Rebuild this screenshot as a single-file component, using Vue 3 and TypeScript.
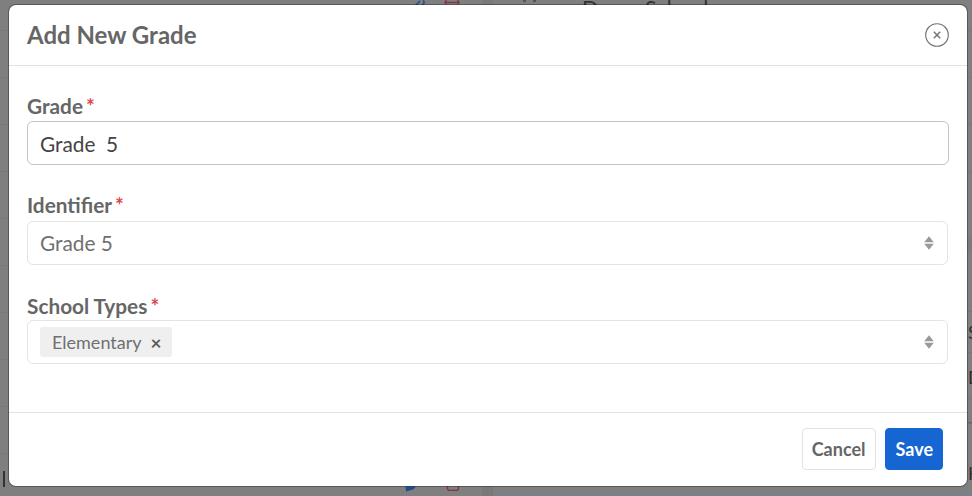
<template>
  <div class="page">
    <!-- dimmed page behind the dialog -->
    <div class="backdrop" aria-hidden="true">
      <i v-for="y in leftLines" :key="'l' + y" class="row-line left" :style="{ top: y + 'px' }"></i>
      <i v-for="y in rightLines" :key="'r' + y" class="row-line right" :style="{ top: y + 'px' }"></i>
      <span class="bg-bar"></span>
      <svg class="bg-icon edit-top" width="12" height="6" viewBox="0 0 12 6" fill="none">
        <path d="M1.5 5.5L6 1M9 0.5c1.5 1 1.5 2.5 0 4l-1 1" stroke="#1d4c8f" stroke-width="1.5" />
      </svg>
      <svg class="bg-icon trash-top" width="16" height="5" viewBox="0 0 16 5" fill="none">
        <path d="M2 0v4.5M14 0v4.5M0 2.5h16" stroke="#80393c" stroke-width="1.4" />
      </svg>
      <svg class="bg-icon edit-bottom" width="12" height="6" viewBox="0 0 12 6">
        <path d="M0.5 0.5H11L8 3.5 1 5.5z" fill="#1d4c8f" />
      </svg>
      <svg class="bg-icon trash-bottom" width="14" height="5" viewBox="0 0 14 5" fill="none">
        <path d="M1.5 0v2.5q0 2 2 2h7q2 0 2-2V0" stroke="#80393c" stroke-width="1.4" />
      </svg>
      <span class="bg-divider"></span>
      <span class="bg-dot one"></span>
      <span class="bg-dot two"></span>
      <span class="bg-title">Demo School</span>
      <span class="bg-band"></span>
      <span class="bg-bottom-line"></span>
      <span class="bg-letter s">S</span>
      <span class="bg-letter d">D</span>
      <span class="bg-letter t">T</span>
      <span class="bg-letter h">H</span>
    </div>

    <div class="modal">
      <header class="modal-header">
        <h2>Add New Grade</h2>
        <button class="close-btn" type="button" aria-label="Close">
          <svg width="24" height="24" viewBox="0 0 24 24" fill="none">
            <circle cx="12" cy="12" r="11.3" stroke="#6f6f6f" stroke-width="1.1" />
            <path d="M8.8 8.8l6.4 6.4M15.2 8.8l-6.4 6.4" stroke="#757575" stroke-width="1.5" />
          </svg>
        </button>
      </header>

      <form class="modal-body" @submit.prevent>
        <div class="field first">
          <label for="grade">Grade<em>*</em></label>
          <input id="grade" v-model="grade" class="control active" type="text" />
        </div>

        <div class="field identifier">
          <label>Identifier<em>*</em></label>
          <div class="control select">
            <span class="value">Grade 5</span>
            <svg class="updown" width="10" height="14" viewBox="0 0 10 14"><path d="M5 0.3L9.8 6.2H0.2zM5 13.7L0.2 7.8h9.6z" /></svg>
          </div>
        </div>

        <div class="field">
          <label>School Types<em>*</em></label>
          <div class="control select multi">
            <span v-for="t in schoolTypes" :key="t" class="tag">{{ t }}<b>×</b></span>
            <svg class="updown" width="10" height="14" viewBox="0 0 10 14"><path d="M5 0.3L9.8 6.2H0.2zM5 13.7L0.2 7.8h9.6z" /></svg>
          </div>
        </div>
      </form>

      <footer class="modal-footer">
        <button class="btn cancel" type="button">Cancel</button>
        <button class="btn primary" type="submit">Save</button>
      </footer>
    </div>
  </div>
</template>

<script setup lang="ts">
import { ref } from 'vue'

const grade = ref('Grade  5')
const schoolTypes = ['Elementary']
const leftLines = [30, 77, 124, 171, 218, 265, 312, 359, 406, 453]
const rightLines = [30, 77, 124, 171, 311, 352, 398]
</script>

<style>
html,
body {
  margin: 0;
  background: #7f7f7f;
}
</style>

<style scoped>
.page {
  position: relative;
  width: 972px;
  height: 496px;
  overflow: hidden;
  background: #7f7f7f;
  font-family: Lato, "Liberation Sans", sans-serif;
  color: #5f5f5f;
}

.backdrop {
  position: absolute;
  inset: 0;
}

.row-line {
  position: absolute;
  height: 1px;
  background: #727a87;
}

.row-line.left {
  left: 0;
  width: 9px;
}

.row-line.right {
  left: 967px;
  width: 5px;
}

.bg-bar {
  position: absolute;
  left: 3px;
  top: 471px;
  width: 2px;
  height: 16px;
  background: #333;
}

.bg-icon {
  position: absolute;
  display: block;
}

.edit-top {
  left: 414px;
  top: 0;
}

.trash-top {
  left: 444px;
  top: 0;
}

.edit-bottom {
  left: 405px;
  top: 486px;
}

.trash-bottom {
  left: 446px;
  top: 486px;
}

.bg-divider {
  position: absolute;
  left: 482px;
  top: 0;
  bottom: 0;
  width: 11px;
  background: #797979;
}

.bg-dot {
  position: absolute;
  top: 0;
  width: 3px;
  height: 2px;
  background: #555;
}

.bg-dot.one {
  left: 523px;
}

.bg-dot.two {
  left: 533px;
}

.bg-title {
  position: absolute;
  left: 582px;
  top: -5px;
  font-size: 21.5px;
  line-height: 26px;
  color: #333;
}

.bg-band {
  position: absolute;
  left: 967px;
  top: 239px;
  width: 5px;
  height: 12px;
  background: #7a7a7a;
}

.bg-bottom-line {
  position: absolute;
  left: 493px;
  right: 0;
  top: 494px;
  height: 2px;
  background: #76808e;
}

.bg-letter {
  position: absolute;
  left: 968px;
  font-size: 18px;
  line-height: 20px;
  color: #2f2f2f;
}

.bg-letter.s {
  top: 322px;
}

.bg-letter.d {
  top: 367px;
}

.bg-letter.t {
  top: 418px;
  color: #666;
}

.bg-letter.h {
  top: 463px;
}

.modal {
  position: absolute;
  left: 9px;
  top: 5px;
  width: 958px;
  height: 481px;
  display: flex;
  flex-direction: column;
  background: #fff;
  border-radius: 7px;
  box-shadow: 0 0 0 1px rgba(0, 0, 0, 0.3);
}

.modal-header {
  height: 61px;
  box-sizing: border-box;
  display: flex;
  align-items: center;
  justify-content: space-between;
  padding: 0 18px;
  border-bottom: 1px solid #e2e2e2;
}

.modal-header h2 {
  margin: 0 0 1px;
  font-size: 24px;
  font-weight: 700;
  color: #666;
}

.close-btn {
  display: flex;
  padding: 0;
  border: 0;
  background: none;
}

.modal-body {
  flex: 1;
  padding: 26px 18px 0;
  display: flex;
  flex-direction: column;
  gap: 27px;
}

.field label {
  display: block;
  height: 28px;
  font-size: 20.8px;
  font-weight: 700;
  line-height: 28px;
  color: #666;
}

.field.first label {
  height: 29px;
}

.field.identifier label {
  margin-top: 1px;
  line-height: 24px;
}

.field em {
  margin-left: 3px;
  font-style: normal;
  font-weight: 700;
  color: #d9474f;
}

.control {
  display: flex;
  align-items: center;
  box-sizing: border-box;
  width: 921px;
  height: 44px;
  padding: 0 12px;
  border: 1px solid #e4e4e4;
  border-radius: 6px;
  background: #fff;
  font: 400 20.8px Lato, "Liberation Sans", sans-serif;
  color: #707070;
}

.control.active {
  width: 922px;
  border-color: #c4c4c4;
  color: #444;
  white-space: pre;
  outline: none;
}

.select {
  position: relative;
}

.value {
  margin-bottom: 2px;
}

.updown {
  position: absolute;
  right: 13px;
  top: 13.5px;
  fill: #999;
}

.tag {
  display: inline-flex;
  align-items: center;
  height: 30px;
  padding: 0 10px 0 12px;
  border-radius: 3px;
  background: #efefef;
  font-size: 18px;
  color: #707070;
}

.tag b {
  margin-left: 9px;
  font-size: 19px;
  color: #5c5c5c;
}

.modal-footer {
  height: 74px;
  box-sizing: border-box;
  display: flex;
  justify-content: flex-end;
  align-items: flex-start;
  gap: 9px;
  padding: 15px 24px 0 0;
  border-top: 1px solid #e2e2e2;
}

.btn {
  height: 42px;
  padding: 0 9px;
  border: 1px solid #e2e2e2;
  border-radius: 4px;
  background: #fff;
  font: 700 18px Lato, "Liberation Sans", sans-serif;
  color: #666;
}

.btn.cancel {
  padding: 0 10px 0 9px;
}

.btn.primary {
  border-color: #1565d2;
  background: #1565d2;
  color: #fff;
}
</style>
